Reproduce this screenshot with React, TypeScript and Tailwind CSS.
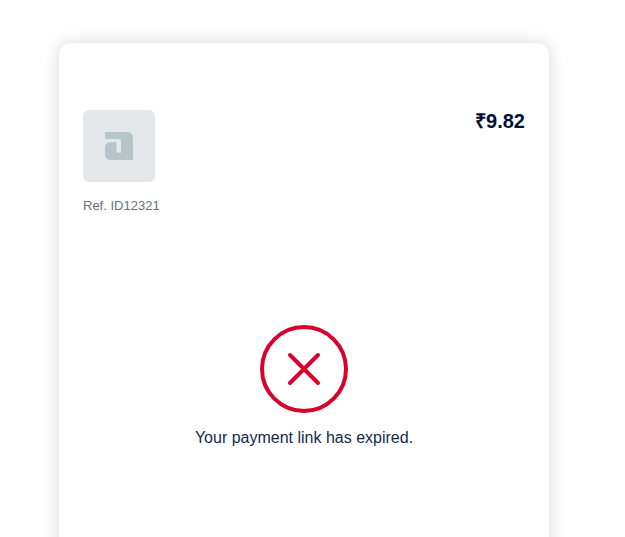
function MerchantLogo() {
  return (
    <div className="flex size-[72px] items-center justify-center rounded-md bg-[#e4e8eb]">
      <svg width="28" height="28" viewBox="0 0 28 28" fill="#b7c4c9" aria-hidden="true">
        <path d="M0 0H22Q28 0 28 6V28H6Q0 28 0 22V16Q0 10 6 10H11.5V19Q11.5 20.8 13.3 20.8H16V9Q16 7 14 7H0Z" />
      </svg>
    </div>
  );
}

function ExpiredIcon() {
  return (
    <svg width="88" height="88" viewBox="0 0 88 88" fill="none" stroke="#d9002b" strokeWidth="4" strokeLinecap="round" aria-hidden="true">
      <circle cx="44" cy="44" r="42" />
      <path d="M30 30L58 58M58 30L30 58" />
    </svg>
  );
}

export default function App() {
  const payment = {
    amount: "₹9.82",
    reference: "ID12321",
  };

  return (
    <main className="h-screen overflow-hidden bg-white pt-[43px] pl-[59px] font-['Liberation_Sans',Arial,sans-serif]">
      <section className="h-[600px] w-[490px] rounded-xl bg-white px-6 pt-[67px] shadow-[0_0_16px_rgba(0,16,51,0.16)]">
        <header className="flex items-start justify-between">
          <div>
            <MerchantLogo />
            <p className="mt-3.5 text-[13px] leading-5 text-[#687182]">Ref. {payment.reference}</p>
          </div>
          <p className="text-xl leading-[22px] font-bold text-[#001033]">{payment.amount}</p>
        </header>

        <div className="mt-[109px] flex flex-col items-center">
          <ExpiredIcon />
          <p className="mt-[13px] text-base leading-6 text-[#14294b]">Your payment link has expired.</p>
        </div>
      </section>
    </main>
  );
}
